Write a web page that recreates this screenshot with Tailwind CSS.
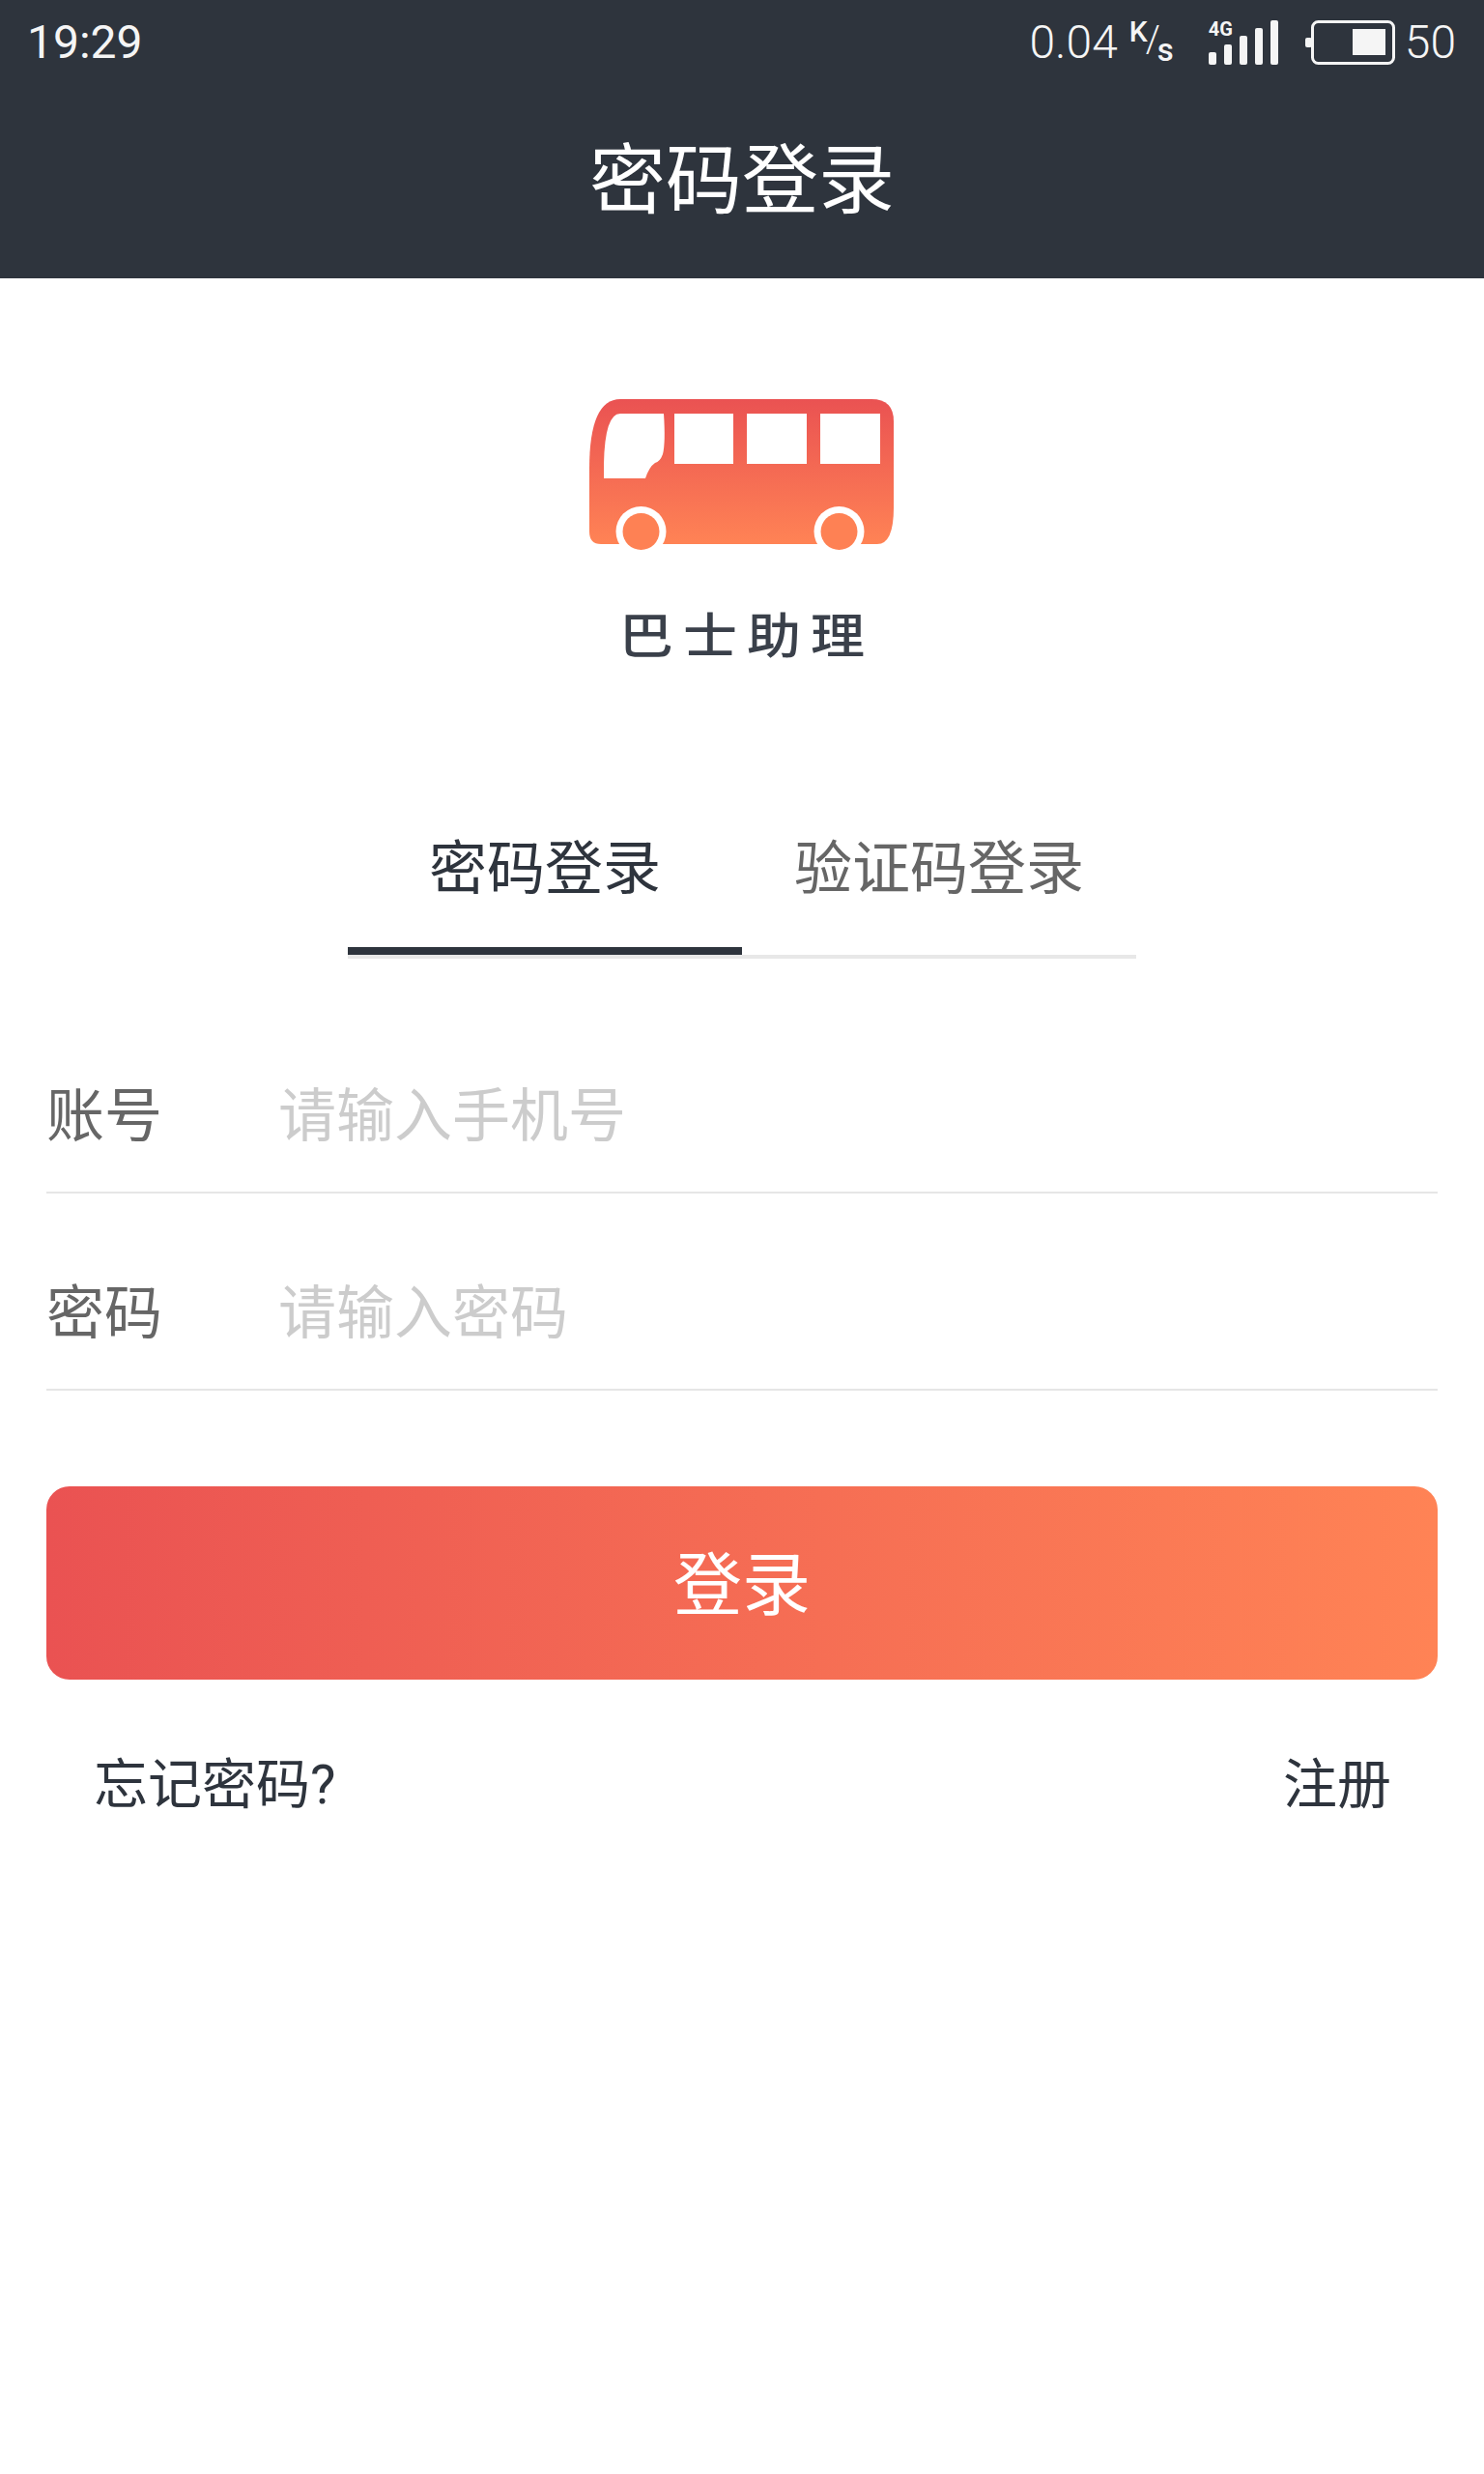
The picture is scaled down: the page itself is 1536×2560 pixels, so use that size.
<!DOCTYPE html>
<html lang="zh-CN">

<head>
    <meta charset="UTF-8">
    <title>密码登录</title>
    <script src="https://cdn.jsdelivr.net/npm/@tailwindcss/browser@4"></script>
</head>

<body class="bg-white min-h-screen font-['Roboto','Noto_Sans_CJK_SC',sans-serif] text-[#2e343d]">
    <!-- Header -->
    <header class="h-[288px] bg-[#2e343d] text-white flex flex-col">
        <div class="h-[88px] flex items-center justify-between pl-[28px] pr-[29px] text-[#f5f5f5]">
            <span class="text-[48px] leading-none">19:29</span>
            <div class="flex items-center">
                <span class="text-[48px] font-light leading-none">0.04</span>
                <span class="relative w-[47px] h-[44px] ml-[12px] mt-[2px] font-medium">
                    <span class="absolute left-0 top-[-5px] text-[30px] leading-none">K</span>
                    <span class="absolute left-[17px] top-[-1px] text-[38px] font-light leading-none">/</span>
                    <span class="absolute left-[29px] top-[12px] text-[33px] leading-none">s</span>
                </span>
                <div class="relative w-[72px] h-[46px] ml-[35px]">
                    <span class="absolute left-0 top-[-1px] text-[20px] font-bold leading-none">4G</span>
                    <svg class="w-[72px] h-[46px]" viewBox="0 0 72 46" fill="currentColor">
                        <rect x="0" y="33" width="8" height="13" rx="2" />
                        <rect x="16" y="25" width="8" height="21" rx="2" />
                        <rect x="32" y="16" width="8" height="30" rx="2" />
                        <rect x="48" y="8" width="8" height="38" rx="2" />
                        <rect x="64" y="0" width="8" height="46" rx="2" />
                    </svg>
                </div>
                <svg class="w-[94px] h-[46px] ml-[28px]" viewBox="0 0 94 46" fill="none">
                    <rect x="0" y="18" width="7" height="10" rx="2" fill="currentColor" />
                    <rect x="7.500" y="1.500" width="84" height="43" rx="6" stroke="currentColor" stroke-width="3" />
                    <rect x="49" y="9" width="34" height="27" fill="currentColor" />
                </svg>
                <span class="text-[48px] font-light leading-none ml-[9px]">50</span>
            </div>
        </div>
        <h1 class="flex-1 flex items-center justify-center text-[79px] font-normal leading-none">密码登录</h1>
    </header>

    <!-- Logo -->
    <div class="flex flex-col items-center pt-[125px]">
        <svg class="w-[316px] h-[158px]" viewBox="30 23 316 158">
            <defs>
                <linearGradient id="busFill" x1="0" y1="0" x2="0" y2="1">
                    <stop offset="0" stop-color="#ea5252" />
                    <stop offset="1" stop-color="#ff8355" />
                </linearGradient>
            </defs>
            <path fill="url(#busFill)"
                d="M62 23H322Q345 23 345 46V135Q345 173 328 173H42Q30 173 30 160V95Q30 23 62 23Z" />
            <path fill="#fff" d="M45 105V90Q46 38 62 38H107Q109 68 106 80Q103 88 98 89Q92 93 88 105Z" />
            <rect fill="#fff" x="118" y="38" width="61" height="52" />
            <rect fill="#fff" x="193" y="38" width="62" height="52" />
            <rect fill="#fff" x="269" y="38" width="62" height="52" />
            <circle fill="#fff" cx="83.500" cy="160" r="26" />
            <circle fill="#fff" cx="288.500" cy="160" r="26" />
            <rect fill="#fff" x="30" y="173" width="316" height="8" />
            <circle fill="#fe8154" cx="83.500" cy="160" r="19" />
            <circle fill="#fe8154" cx="288.500" cy="160" r="19" />
        </svg>
        <div
            class="mt-[63px] text-[50px] leading-none font-medium tracking-[9px] mr-[-9px] scale-x-[1.12] text-[#3a404a]">
            巴士助理</div>
    </div>

    <!-- Tabs -->
    <div class="w-[816px] mx-auto mt-[132px] flex border-b-4 border-[#e8e8e8] text-[60px]">
        <button type="button" class="flex-1 h-[172px] pt-[4px] border-b-8 border-[#2e343d]">密码登录</button>
        <button type="button" class="flex-1 h-[172px] pt-[4px] border-b-8 border-transparent text-[#666]">验证码登录</button>
    </div>

    <!-- Form -->
    <form class="px-[48px] mt-[39px]">
        <div class="flex items-center h-[204px] pt-[47px] border-b-2 border-[#e6e6e6]">
            <label class="w-[240px] text-[60px] text-[#666]">账号</label>
            <input type="text" placeholder="请输入手机号"
                class="flex-1 text-[60px] outline-none placeholder:text-[#ccc]">
        </div>
        <div class="flex items-center h-[204px] pt-[47px] border-b-2 border-[#e6e6e6]">
            <label class="w-[240px] text-[60px] text-[#666]">密码</label>
            <input type="password" placeholder="请输入密码"
                class="flex-1 text-[60px] outline-none placeholder:text-[#ccc]">
        </div>
        <button type="button"
            class="w-full h-[200px] mt-[99px] pt-[6px] rounded-[24px] bg-gradient-to-r from-[#ea5252] to-[#ff8355] text-white text-[71px]">登录</button>
        <div class="flex justify-between pl-[49px] pr-[48px] mt-[77px] text-[56px] leading-[64px]">
            <a href="#">忘记密码?</a>
            <a href="#">注册</a>
        </div>
    </form>
</body>

</html>
